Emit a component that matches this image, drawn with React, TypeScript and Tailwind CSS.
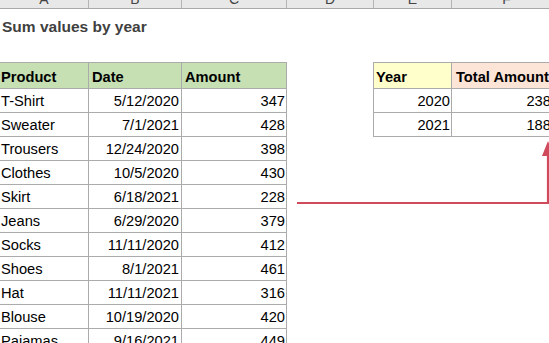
const LINE = "border-[#ababab]";

type Row = { product: string; date: string; amount: number };

const ROWS: Row[] = [
  { product: "T-Shirt", date: "5/12/2020", amount: 347 },
  { product: "Sweater", date: "7/1/2021", amount: 428 },
  { product: "Trousers", date: "12/24/2020", amount: 398 },
  { product: "Clothes", date: "10/5/2020", amount: 430 },
  { product: "Skirt", date: "6/18/2021", amount: 228 },
  { product: "Jeans", date: "6/29/2020", amount: 379 },
  { product: "Socks", date: "11/11/2020", amount: 412 },
  { product: "Shoes", date: "8/1/2021", amount: 461 },
  { product: "Hat", date: "11/11/2021", amount: 316 },
  { product: "Blouse", date: "10/19/2020", amount: 420 },
  { product: "Pajamas", date: "9/16/2021", amount: 449 },
];

const TOTALS = [
  { year: "2020", total: 2386 },
  { year: "2021", total: 1882 },
];

const COLUMNS = [
  { letter: "A", w: "w-[89px]" },
  { letter: "B", w: "w-[93px]" },
  { letter: "C", w: "w-[105px]" },
  { letter: "D", w: "w-[87px]" },
  { letter: "E", w: "w-[78px]" },
  { letter: "F", w: "w-[110px]" },
];

export default function App() {
  return (
    <div
      className="relative w-[549px] h-[343px] overflow-hidden bg-white text-black"
      style={{ fontFamily: '"Liberation Sans", Arial, sans-serif' }}
    >
      {/* column letters strip, mostly scrolled out of view */}
      <div className="flex h-[9px] bg-[#e8e8e8] border-b border-[#a9a9a9] overflow-hidden">
        {COLUMNS.map((c) => (
          <div key={c.letter} className={`${c.w} shrink-0 h-full border-r border-[#b5b5b5] flex justify-center overflow-hidden`}>
            <span className="text-[14px] leading-none mt-[-8px] text-[#444]">{c.letter}</span>
          </div>
        ))}
      </div>

      <div className="h-[53px] pt-[6px] pl-[2px]">
        <p className="text-[15.5px] font-bold text-[#404040] leading-normal">Sum values by year</p>
      </div>

      <div className="flex items-start text-[14.67px] leading-normal">
        {/* source data */}
        <div className={`grid grid-cols-[89px_93px_105px] border-t ${LINE}`}>
          <div className={`h-[26px] flex items-end pl-[1px] font-bold bg-[#c6e0b4] border-r border-b ${LINE}`}>Product</div>
          <div className={`h-[26px] flex items-end pl-[3px] font-bold bg-[#c6e0b4] border-r border-b ${LINE}`}>Date</div>
          <div className={`h-[26px] flex items-end pl-[3px] font-bold bg-[#c6e0b4] border-r border-b ${LINE}`}>Amount</div>
          {ROWS.map((r) => (
            <>
              <div key={r.product} className={`h-[24px] flex items-end pl-[1px] border-r border-b ${LINE}`}>{r.product}</div>
              <div key={r.product + "d"} className={`h-[24px] flex items-end justify-end pr-[2px] border-r border-b ${LINE}`}>{r.date}</div>
              <div key={r.product + "a"} className={`h-[24px] flex items-end justify-end pr-[1px] border-r border-b ${LINE}`}>{r.amount}</div>
            </>
          ))}
        </div>

        {/* yearly totals */}
        <div className={`ml-[86px] shrink-0 grid grid-cols-[78px_110px] border-t border-l ${LINE}`}>
          <div className={`h-[26px] flex items-end pl-[2px] font-bold bg-[#ffffcc] border-r border-b ${LINE}`}>Year</div>
          <div className={`h-[26px] flex items-end pl-[4px] font-bold bg-[#fce4d6] border-r border-b ${LINE} whitespace-nowrap`}>Total Amount</div>
          {TOTALS.map((t) => (
            <>
              <div key={t.year} className={`h-[24px] flex items-end justify-end pr-[1px] border-r border-b ${LINE}`}>{t.year}</div>
              <div key={t.year + "t"} className={`h-[24px] flex items-end justify-end pr-[2px] border-r border-b ${LINE}`}>{t.total}</div>
            </>
          ))}
        </div>
      </div>

      {/* callout arrow */}
      <svg className="absolute left-0 top-0 pointer-events-none" width="549" height="343" viewBox="0 0 549 343">
        <polyline points="297,203 548,203 548,152" fill="none" stroke="#cf4b5b" strokeWidth="2.2" />
        <polygon points="548,141 542,156 554,156" fill="#cf4b5b" />
      </svg>
    </div>
  );
}
